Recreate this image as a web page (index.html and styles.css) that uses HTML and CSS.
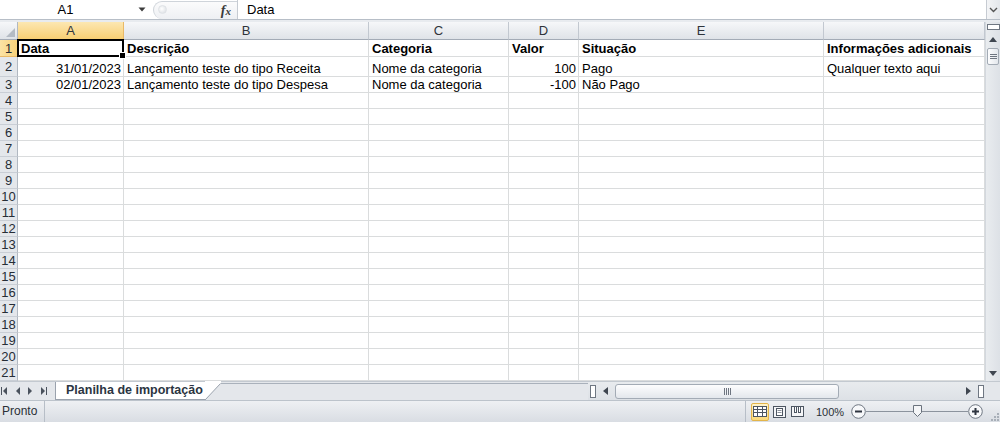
FILE: index.html
```html
<!DOCTYPE html>
<html lang="pt">
<head>
<meta charset="utf-8">
<title>Planilha de importação</title>
<link rel="stylesheet" href="styles.css">
</head>
<body>
<div class="app">
  <div class="fbar">
    <div class="namebox">A1</div>
    <div class="nb-drop"><svg width="8" height="5" viewBox="0 0 8 5"><path d="M0.5 0.5h7L4 4.5z" fill="#3c3c3c"/></svg></div>
    <div class="fb-mid"><span class="grip"></span><span class="fx"><i>f</i><i class="x">x</i></span></div>
    <div class="fb-input">Data</div>
    <div class="fb-expand"><svg width="9" height="6" viewBox="0 0 9 6"><path d="M1 1l3.5 3.5L8 1" fill="none" stroke="#555" stroke-width="1.4"/></svg></div>
  </div>
  <div class="fb-sep"></div>
  <div class="main">
    <div class="sheet">
      <div class="row hdr">
        <div class="corner"><svg width="9" height="9" viewBox="0 0 9 9"><path d="M9 0v9H0z" fill="#b4bbc4"/></svg></div>
        <div class="ch sel">A</div>
        <div class="ch">B</div>
        <div class="ch">C</div>
        <div class="ch">D</div>
        <div class="ch">E</div>
        <div class="ch"></div>
      </div>
      <div class="row r1 bold">
        <div class="rh sel">1</div>
        <div>Data</div>
        <div>Descrição</div>
        <div>Categoria</div>
        <div>Valor</div>
        <div>Situação</div>
        <div>Informações adicionais</div>
      </div>
      <div class="row r2">
        <div class="rh">2</div>
        <div class="num">31/01/2023</div>
        <div>Lançamento teste do tipo Receita</div>
        <div>Nome da categoria</div>
        <div class="num">100</div>
        <div>Pago</div>
        <div>Qualquer texto aqui</div>
      </div>
      <div class="row">
        <div class="rh">3</div>
        <div class="num">02/01/2023</div>
        <div>Lançamento teste do tipo Despesa</div>
        <div>Nome da categoria</div>
        <div class="num">-100</div>
        <div>Não Pago</div>
        <div></div>
      </div>
      <div class="row"><div class="rh">4</div><div></div><div></div><div></div><div></div><div></div><div></div></div>
      <div class="row"><div class="rh">5</div><div></div><div></div><div></div><div></div><div></div><div></div></div>
      <div class="row"><div class="rh">6</div><div></div><div></div><div></div><div></div><div></div><div></div></div>
      <div class="row"><div class="rh">7</div><div></div><div></div><div></div><div></div><div></div><div></div></div>
      <div class="row"><div class="rh">8</div><div></div><div></div><div></div><div></div><div></div><div></div></div>
      <div class="row"><div class="rh">9</div><div></div><div></div><div></div><div></div><div></div><div></div></div>
      <div class="row"><div class="rh">10</div><div></div><div></div><div></div><div></div><div></div><div></div></div>
      <div class="row"><div class="rh">11</div><div></div><div></div><div></div><div></div><div></div><div></div></div>
      <div class="row"><div class="rh">12</div><div></div><div></div><div></div><div></div><div></div><div></div></div>
      <div class="row"><div class="rh">13</div><div></div><div></div><div></div><div></div><div></div><div></div></div>
      <div class="row"><div class="rh">14</div><div></div><div></div><div></div><div></div><div></div><div></div></div>
      <div class="row"><div class="rh">15</div><div></div><div></div><div></div><div></div><div></div><div></div></div>
      <div class="row"><div class="rh">16</div><div></div><div></div><div></div><div></div><div></div><div></div></div>
      <div class="row"><div class="rh">17</div><div></div><div></div><div></div><div></div><div></div><div></div></div>
      <div class="row"><div class="rh">18</div><div></div><div></div><div></div><div></div><div></div><div></div></div>
      <div class="row"><div class="rh">19</div><div></div><div></div><div></div><div></div><div></div><div></div></div>
      <div class="row"><div class="rh">20</div><div></div><div></div><div></div><div></div><div></div><div></div></div>
      <div class="row"><div class="rh">21</div><div></div><div></div><div></div><div></div><div></div><div></div></div>
      <div class="sel-box"><span class="fill-handle"></span></div>
    </div>
    <div class="vscroll">
      <div class="vsplit"><span></span></div>
      <div class="vbtn"><svg width="8" height="5" viewBox="0 0 8 5"><path d="M0 5h8L4 0z" fill="#3f4650"/></svg></div>
      <div class="vthumb"><span></span><span></span><span></span></div>
      <div class="vtrack"></div>
      <div class="vbtn"><svg width="8" height="5" viewBox="0 0 8 5"><path d="M0 0h8L4 5z" fill="#3f4650"/></svg></div>
    </div>
  </div>
  <div class="tabbar">
    <div class="tabnav">
      <svg width="6" height="8" viewBox="0 0 6 8"><path d="M0 0h1v8H0z M6 0v8L2 4z" fill="#4a525d"/></svg>
      <svg width="5" height="8" viewBox="0 0 5 8"><path d="M5 0v8L1 4z" fill="#4a525d"/></svg>
      <svg width="5" height="8" viewBox="0 0 5 8"><path d="M0 0v8l4-4z" fill="#4a525d"/></svg>
      <svg width="6" height="8" viewBox="0 0 6 8"><path d="M0 0v8l4-4z M5 0h1v8H5z" fill="#4a525d"/></svg>
    </div>
    <div class="tab">Planilha de importação</div>
    <svg class="tab-slant" width="16" height="19" viewBox="0 0 16 19"><path d="M0 0H16V2L1 18H0z" fill="#fff"/><path d="M0.5 18.5L15.5 2.5" stroke="#9aa2ad" stroke-width="1" fill="none"/><path d="M0 18.5h1" stroke="#9aa2ad"/></svg>
    <div class="tabspace"></div>
    <div class="hscroll">
      <div class="hsplit"><span></span></div>
      <div class="hbtn"><svg width="5" height="8" viewBox="0 0 5 8"><path d="M5 0v8L0 4z" fill="#3f4650"/></svg></div>
      <div class="hthumb"><span></span><span></span><span></span><span></span></div>
      <div class="htrack"></div>
      <div class="hbtn r"><svg width="5" height="8" viewBox="0 0 5 8"><path d="M0 0v8l5-4z" fill="#3f4650"/></svg></div>
      <div class="hsplit"><span></span></div>
    </div>
    <div class="hcorner"></div>
  </div>
  <div class="status">
    <div class="st-left">Pronto</div>
    <div class="st-spacer"></div>
    <div class="views">
      <div class="vbtn-view active"><svg width="14" height="11" viewBox="0 0 14 11"><rect x="0.5" y="0.5" width="13" height="10" fill="#fff" stroke="#4d5662"/><path d="M0.5 3.5h13M0.5 6.5h13M4.5 0.5v10M9.5 0.5v10" stroke="#4d5662"/></svg></div>
      <div class="vbtn-view pl"><svg width="13" height="12" viewBox="0 0 13 12"><rect x="0.5" y="0.5" width="12" height="11" fill="#f4f5f7" stroke="#4d5662"/><rect x="3.5" y="2.5" width="6" height="7" fill="#fff" stroke="#4d5662"/><path d="M4.5 4.5h4M4.5 6.5h4" stroke="#8a919b"/></svg></div>
      <div class="vbtn-view pb"><svg width="13" height="11" viewBox="0 0 13 11"><rect x="0.5" y="0.5" width="12" height="10" fill="#f4f5f7" stroke="#4d5662"/><rect x="3.5" y="0.5" width="2" height="6" fill="#fff" stroke="#4d5662"/><rect x="7.5" y="0.5" width="2" height="6" fill="#fff" stroke="#4d5662"/></svg></div>
      <div class="zoom-pct">100%</div>
      <div class="zbtn zminus"><svg width="15" height="15" viewBox="0 0 15 15"><circle cx="7.5" cy="7.5" r="6.8" fill="#f7f8fa" stroke="#6f7782"/><path d="M4 7.5h7" stroke="#2f3540" stroke-width="2"/></svg></div>
      <div class="zslider">
        <svg width="102" height="15" viewBox="0 0 102 15"><path d="M0 7.5h102" stroke="#8c939d" stroke-width="1"/><path d="M47.5 1.5h8v7l-4 4l-4-4z" fill="#f4f5f7" stroke="#6a727d"/></svg>
      </div>
      <div class="zbtn"><svg width="15" height="15" viewBox="0 0 15 15"><circle cx="7.5" cy="7.5" r="6.8" fill="#f7f8fa" stroke="#6f7782"/><path d="M4 7.5h7M7.5 4v7" stroke="#2f3540" stroke-width="2"/></svg></div>
      <div class="grip-corner"><svg width="10" height="10" viewBox="0 0 10 10"><g fill="#a8afb8"><rect x="8" y="2" width="2" height="2"/><rect x="5" y="5" width="2" height="2"/><rect x="8" y="5" width="2" height="2"/><rect x="2" y="8" width="2" height="2"/><rect x="5" y="8" width="2" height="2"/><rect x="8" y="8" width="2" height="2"/></g></svg></div>
    </div>
  </div>
</div>
</body>
</html>
```

FILE: styles.css
```css
html, body {
  margin: 0;
  padding: 0;
}
body {
  width: 1000px;
  height: 422px;
  overflow: hidden;
  background: #fff;
  font-family: "Liberation Sans", Arial, sans-serif;
  color: #000;
}
.app {
  display: flex;
  flex-direction: column;
  width: 1000px;
  height: 422px;
}

/* formula bar */
.fbar {
  display: flex;
  height: 19px;
  background: #fff;
}
.namebox {
  width: 131px;
  font-size: 13px;
  line-height: 19px;
  text-align: center;
}
.nb-drop {
  width: 22px;
  display: flex;
  align-items: center;
  justify-content: center;
}
.fb-mid {
  width: 84px;
  box-sizing: border-box;
  margin: 1px 0 0 0;
  height: 18px;
  display: flex;
  align-items: center;
  justify-content: space-between;
  padding: 0 6px 0 4px;
  border: 1px solid #cfd4da;
  border-right: none;
  border-bottom: none;
  border-radius: 10px 0 0 10px;
  background: linear-gradient(#fbfbfc, #eef0f3);
}
.grip {
  width: 7px;
  height: 7px;
  border-radius: 50%;
  margin-top: -3px;
  background: radial-gradient(circle at 40% 40%, #ffffff, #d7dbe0);
  border: 1px solid #dfe2e6;
}
.fx {
  font-family: "Liberation Serif", "Times New Roman", serif;
  font-weight: bold;
  color: #3a3a3a;
  font-size: 14px;
  line-height: 14px;
}
.fx .x {
  font-size: 11px;
}
.fb-input {
  flex: 1;
  border-left: 1px solid #c6cbd2;
  padding-left: 9px;
  font-size: 13px;
  line-height: 19px;
}
.fb-expand {
  width: 13px;
  border-left: 1px solid #c6cbd2;
  background: linear-gradient(90deg, #f3f4f6, #e4e7eb);
  display: flex;
  align-items: center;
  justify-content: center;
}
.fb-sep {
  height: 3px;
  box-sizing: border-box;
  border-top: 1px solid #b7bec7;
  background: #e8ebef;
}

/* sheet */
.main {
  display: flex;
  height: 359px;
}
.sheet {
  flex: 1;
  position: relative;
  overflow: hidden;
}
.row {
  display: grid;
  grid-template-columns: 18px 106px 245px 140px 70px 245px 1fr;
  height: 16px;
}
.row.hdr { height: 18px; }
.row.r1 { height: 17px; }
.row.r2 { height: 20px; }
.row > div {
  box-sizing: border-box;
  border-right: 1px solid #dadcdd;
  border-bottom: 1px solid #dadcdd;
  font-size: 13px;
  line-height: 15px;
  padding: 0 3px;
  white-space: nowrap;
  overflow: hidden;
  display: flex;
  align-items: flex-end;
}
.row.bold > div { font-weight: bold; }
.row.bold > div.rh { font-weight: normal; }
.row > div.num {
  justify-content: flex-end;
  padding-right: 2px;
}
.row > div.rh {
  background: #e4e7eb;
  border-right: 1px solid #b1b8c1;
  border-bottom: 1px solid #c9ced5;
  justify-content: center;
  align-items: center;
  padding: 0;
  color: #262d36;
}
.row > div.rh.sel {
  background: linear-gradient(90deg, #fbe3a5, #f8d27a);
  border-right: 1px solid #f29436;
  border-bottom: 1px solid #e9b967;
}
.row.hdr > div {
  background: linear-gradient(#f6f7f9, #dfe3e8);
  border-right: 1px solid #c2c8d0;
  border-bottom: 1px solid #a3abb6;
  justify-content: center;
  align-items: center;
  padding: 0;
  color: #2f343b;
}
.row.hdr > div.corner {
  justify-content: flex-end;
  align-items: flex-end;
  padding: 0 2px 2px 0;
  border-right: 1px solid #b1b8c1;
}
.row.hdr > div.ch.sel {
  background: linear-gradient(#fce7b2, #f8cf73);
  border-right: 1px solid #e9b967;
  border-bottom: 1px solid #f29436;
}
.sel-box {
  position: absolute;
  left: 17px;
  top: 17px;
  width: 107px;
  height: 18px;
  box-sizing: border-box;
  border: 2px solid #000;
  pointer-events: none;
}
.fill-handle {
  position: absolute;
  right: -4px;
  bottom: -4px;
  width: 5px;
  height: 5px;
  background: #000;
  border: 1px solid #fff;
}

/* vertical scrollbar */
.vscroll {
  width: 15px;
  display: flex;
  flex-direction: column;
  background: linear-gradient(90deg, #e9ecef, #dde1e6);
  border-left: 1px solid #d3d8de;
  box-sizing: border-box;
}
.vsplit {
  height: 10px;
  display: flex;
  align-items: center;
  justify-content: center;
}
.vsplit span {
  width: 11px;
  height: 4px;
  border: 1px solid #6f7782;
  background: #fff;
}
.vbtn {
  height: 15px;
  display: flex;
  align-items: center;
  justify-content: center;
}
.vthumb {
  height: 17px;
  margin: 1px 1px 0;
  box-sizing: border-box;
  border: 1px solid #a3abb5;
  border-radius: 2px;
  background: linear-gradient(90deg, #fdfdfe, #e3e7ec);
  display: flex;
  flex-direction: column;
  align-items: center;
  justify-content: center;
  gap: 1px;
}
.vthumb span {
  width: 7px;
  height: 1px;
  background: #6e7580;
}
.vtrack { flex: 1; }

/* tabs */
.tabbar {
  display: flex;
  height: 19px;
  background: #e4e7eb;
  border-top: 1px solid #c3c9d0;
  box-sizing: border-box;
}
.tabnav {
  width: 55px;
  display: flex;
  align-items: center;
  gap: 8px;
  padding-left: 1px;
  box-sizing: border-box;
}
.tab {
  width: 150px;
  background: #fff;
  border-left: 1px solid #9aa2ad;
  border-bottom: 1px solid #9aa2ad;
  box-sizing: border-box;
  font-size: 12.5px;
  font-weight: bold;
  color: #2b3542;
  line-height: 17px;
  padding-left: 10px;
  white-space: nowrap;
}
.tab-slant {
  display: block;
  flex: none;
  margin-top: -1px;
}
.tabspace {
  flex: 1;
  border-top: 1px solid #a9b1bb;
  margin-top: 1px;
}
.hscroll {
  width: 397px;
  display: flex;
  align-items: center;
  background: linear-gradient(#e8ebee, #dde1e6);
}
.hsplit {
  width: 9px;
  display: flex;
  justify-content: center;
}
.hsplit span {
  width: 4px;
  height: 11px;
  border: 1px solid #6f7782;
  background: #fff;
}
.hbtn {
  width: 16px;
  display: flex;
  justify-content: center;
}
.hthumb {
  width: 224px;
  height: 15px;
  margin-left: 2px;
  box-sizing: border-box;
  border: 1px solid #a3abb5;
  border-radius: 3px;
  background: linear-gradient(#fdfdfe, #e3e7ec);
  display: flex;
  align-items: center;
  justify-content: center;
  gap: 1px;
}
.hthumb span {
  width: 1px;
  height: 7px;
  background: #6e7580;
}
.htrack { flex: 1; }
.hcorner {
  width: 15px;
  background: #e4e7eb;
}

/* status bar */
.status {
  display: flex;
  height: 22px;
  box-sizing: border-box;
  border-top: 1px solid #bcc3cb;
  background: linear-gradient(#eef0f3, #d9dde3);
  font-size: 12px;
  color: #2a2f36;
}
.st-left {
  width: 45px;
  box-sizing: border-box;
  border-right: 1px solid #b7bec7;
  padding-left: 2px;
  line-height: 20px;
}
.st-spacer { flex: 1; }
.views {
  display: flex;
  align-items: center;
  border-left: 1px solid #b7bec7;
  padding-left: 5px;
}
.vbtn-view {
  width: 14px;
  height: 18px;
  display: flex;
  align-items: center;
  justify-content: center;
  box-sizing: border-box;
}
.vbtn-view.active {
  width: 18px;
  border: 1px solid #e3b54a;
  border-radius: 2px;
  background: linear-gradient(#fff4cc, #fcd978);
}
.vbtn-view.pl { margin-left: 3px; }
.vbtn-view.pb { margin-left: 4px; }
.zoom-pct {
  width: 28px;
  margin-left: 12px;
  font-size: 11px;
  line-height: 20px;
}
.zbtn {
  width: 15px;
  height: 15px;
}
.zbtn.zminus { margin-left: 7px; }
.zslider {
  width: 102px;
  height: 15px;
}
.zslider svg, .zbtn svg { display: block; }
.grip-corner {
  width: 17px;
  height: 21px;
  display: flex;
  align-items: flex-end;
  justify-content: flex-end;
  padding: 0 1px 1px 0;
  box-sizing: border-box;
}
```
